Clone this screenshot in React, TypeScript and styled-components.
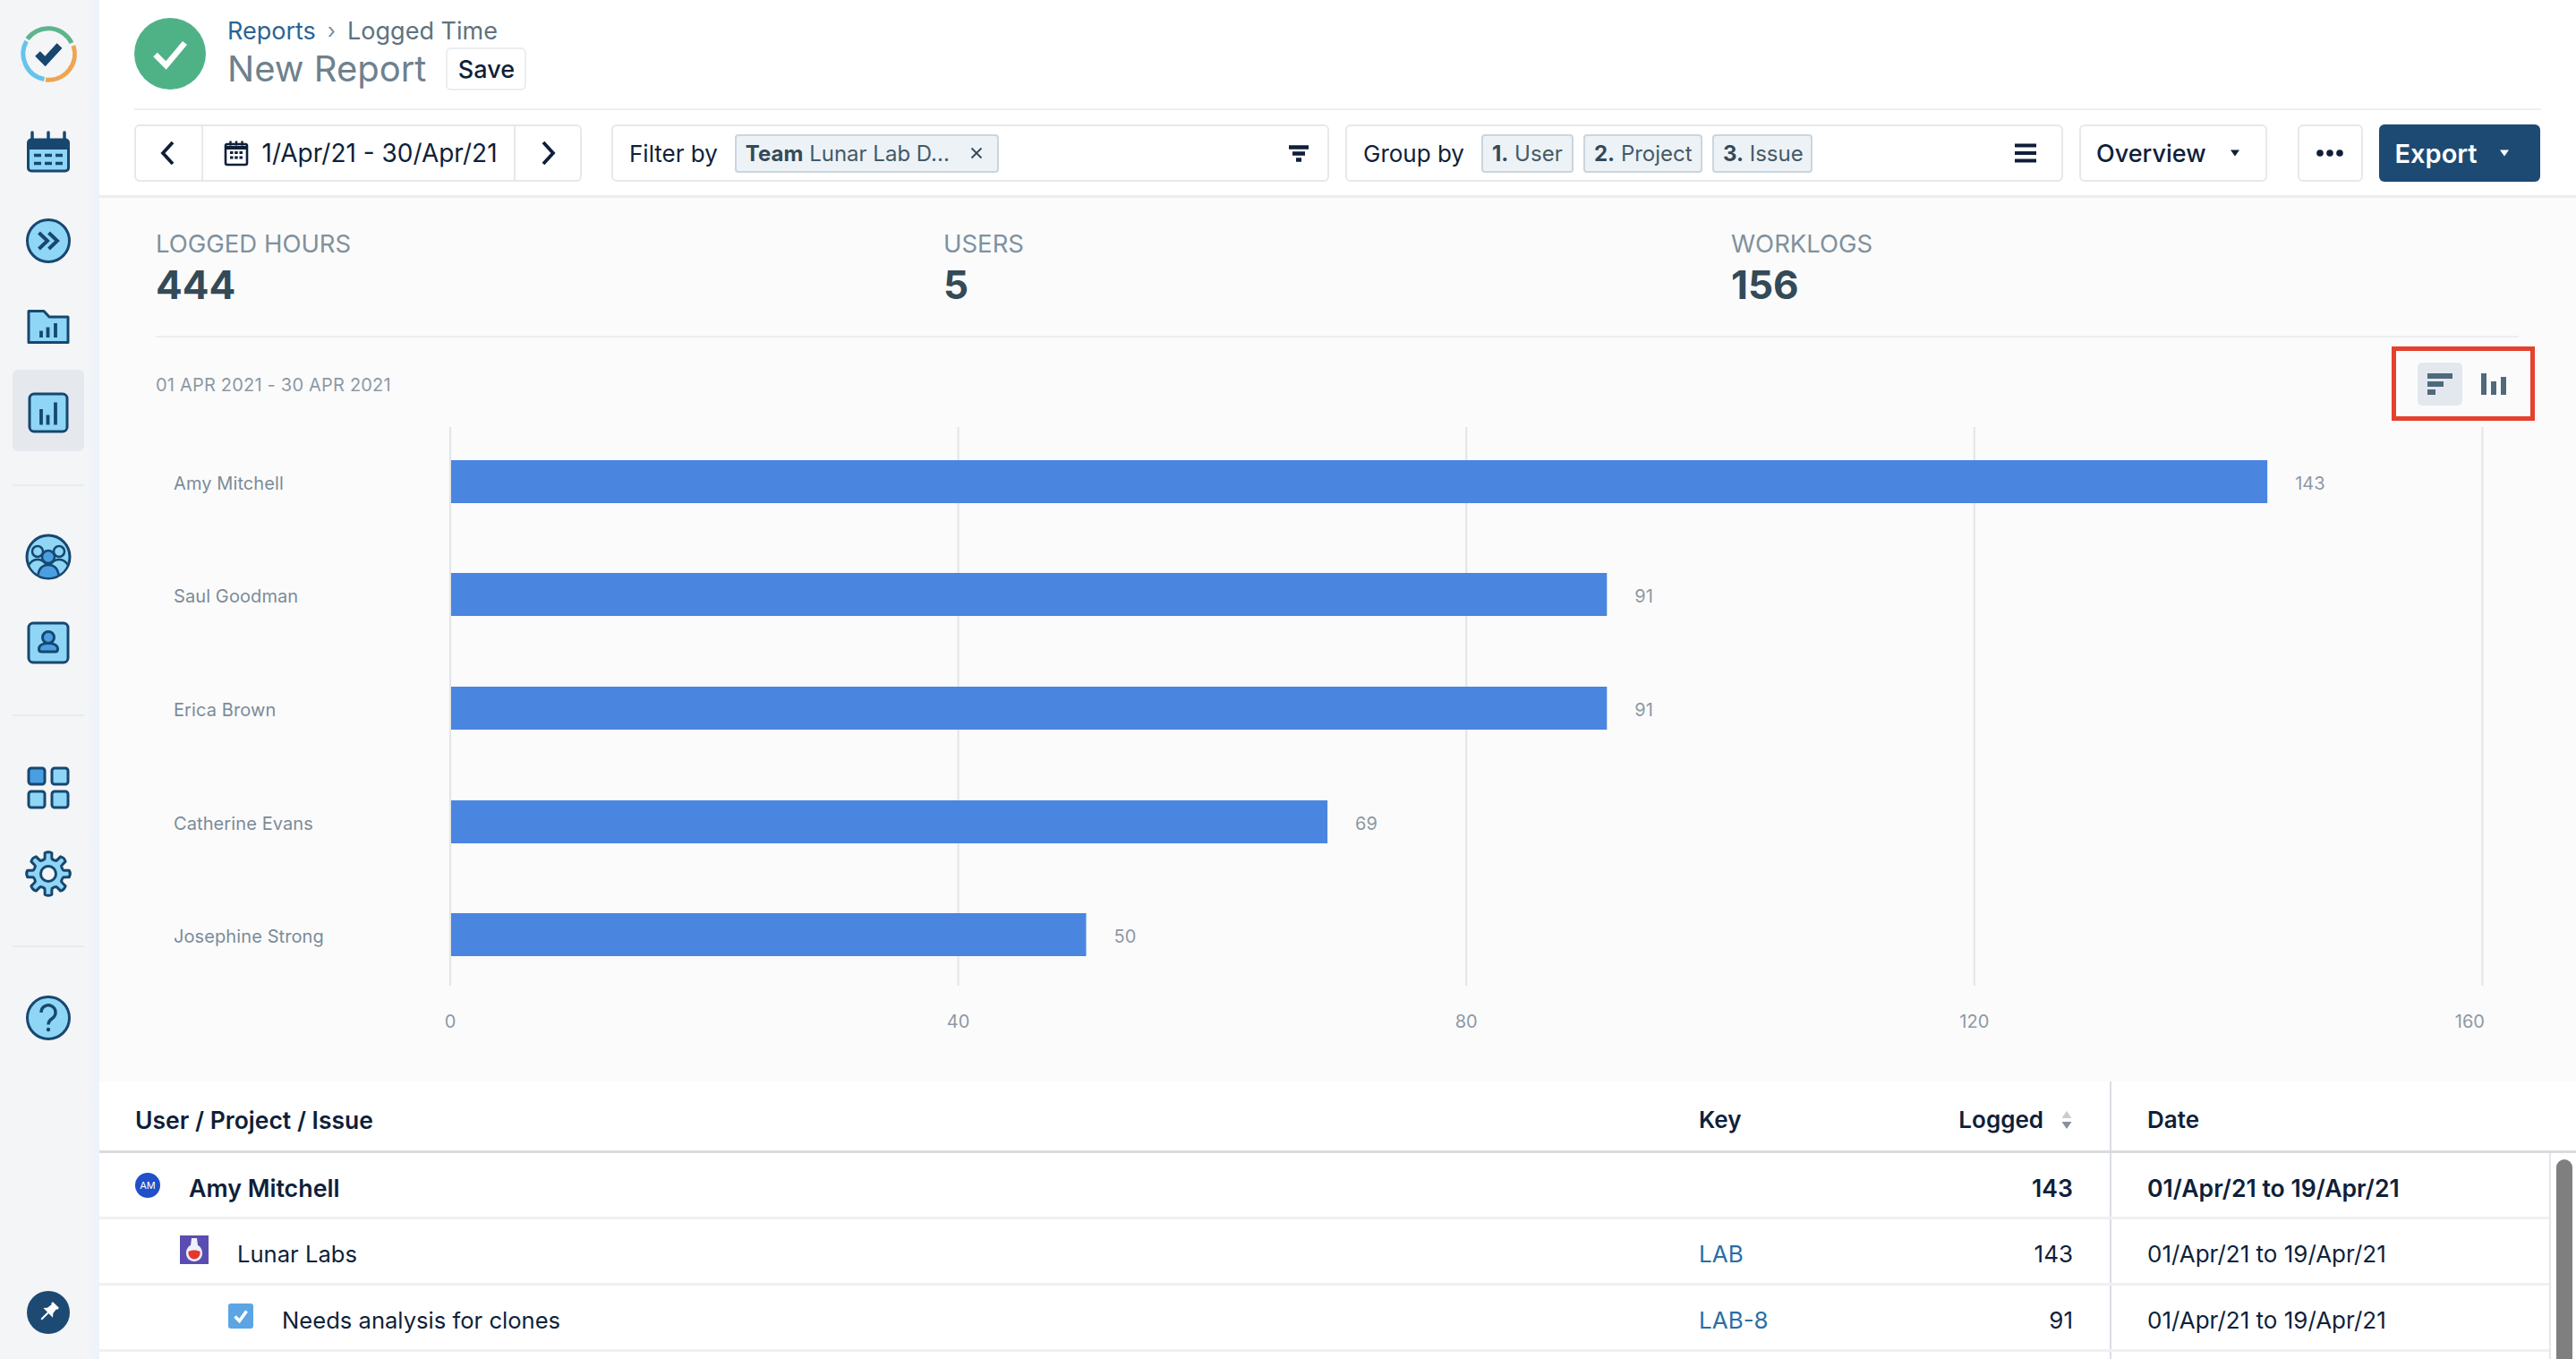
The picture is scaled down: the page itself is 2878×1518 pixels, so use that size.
import React from 'react';
import styled, { createGlobalStyle } from 'styled-components';

const DARK = '#17476f';
const LIGHT = '#8fd6f6';
const MID = '#4a9fe3';

const gearPath = (() => {
  const cx = 32;
  const cy = 32;
  const teeth = 8;
  const pts: string[] = [];
  for (let i = 0; i < teeth; i += 1) {
    const a = (i * 2 * Math.PI) / teeth - Math.PI / 2;
    const step = Math.PI / teeth;
    const pt = (r: number, ang: number) =>
      `${(cx + r * Math.cos(ang)).toFixed(2)} ${(cy + r * Math.sin(ang)).toFixed(2)}`;
    pts.push(`${i === 0 ? 'M' : 'L'}${pt(17, a - step * 0.62)}`);
    pts.push(`Q${pt(19, a - step * 0.5)} ${pt(23.5, a - step * 0.42)}`);
    pts.push(`Q${pt(25.5, a)} ${pt(23.5, a + step * 0.42)}`);
    pts.push(`Q${pt(19, a + step * 0.5)} ${pt(17, a + step * 0.62)}`);
    pts.push(`Q${pt(16, a + step)} ${pt(17, a + step * 1.38)}`);
  }
  return `${pts.join(' ')} Z`;
})();

const Icon64 = ({ children }: { children: React.ReactNode }) => (
  <svg width="64" height="64" viewBox="0 0 64 64" fill="none">
    {children}
  </svg>
);

const LogoIcon = () => (
  <svg width="72" height="72" viewBox="0 0 72 72" fill="none">
    <path d="M12.5 19.5A29 29 0 0 1 62 24" stroke="#5cb58d" strokeWidth="5" />
    <path d="M64 27A29 29 0 0 1 33 65" stroke="#eea551" strokeWidth="5" />
    <path d="M31.5 64.5A29 29 0 0 1 11.5 22" stroke="#66c4ec" strokeWidth="5" />
    <path d="M24 36l8.500 8.500L48.500 27" stroke={DARK} strokeWidth="8" />
  </svg>
);

const CalendarIcon = () => (
  <Icon64>
    <path d="M14 7v9M32 7v9M50 7v9" stroke={DARK} strokeWidth="3.5" strokeLinecap="round" />
    <rect x="9.5" y="15" width="45" height="35" rx="3.5" fill={LIGHT} stroke={DARK} strokeWidth="3" />
    <path d="M9 18.5a4 4 0 0 1 4-4h38a4 4 0 0 1 4 4V26H9z" fill={DARK} />
    <path d="M16 32.5h8M28 32.5h8M40 32.5h8M16 41.5h8M28 41.5h8M40 41.5h8" stroke={DARK} strokeWidth="3.5" />
  </Icon64>
);

const ForwardIcon = () => (
  <Icon64>
    <circle cx="32" cy="32" r="23.5" fill={LIGHT} stroke={DARK} strokeWidth="3" />
    <path d="M21.5 23l9.5 9-9.5 9M32.5 23l9.5 9-9.5 9" stroke={DARK} strokeWidth="4" />
  </Icon64>
);

const FolderIcon = () => (
  <Icon64>
    <path d="M10 14.5h17l6 6.5h21v28.5H10z" fill={LIGHT} stroke={DARK} strokeWidth="3" strokeLinejoin="round" />
    <path d="M24 44v-7.5M31.5 44V32.500M40 44V28" stroke={DARK} strokeWidth="3.8" />
  </Icon64>
);

const ReportIcon = () => (
  <Icon64>
    <rect x="11" y="11" width="42" height="42" rx="5" fill={LIGHT} stroke={DARK} strokeWidth="3" />
    <path d="M24 45.500V28M31.5 45.500V34.500M40 45.500V20.500" stroke={DARK} strokeWidth="3.800" />
  </Icon64>
);

const TeamIcon = () => (
  <Icon64>
    <defs>
      <clipPath id="teamClip">
        <circle cx="32" cy="32" r="23" />
      </clipPath>
    </defs>
    <circle cx="32" cy="32" r="24" fill={LIGHT} stroke={DARK} strokeWidth="3" />
    <g clipPath="url(#teamClip)" stroke={DARK} strokeWidth="2.5">
      <circle cx="20" cy="26" r="6" fill={LIGHT} />
      <circle cx="44" cy="26" r="6" fill={LIGHT} />
      <path d="M8 52c0-11 5-17 12-17s12 6 12 17z" fill={LIGHT} />
      <path d="M32 52c0-11 5-17 12-17s12 6 12 17z" fill={LIGHT} />
      <circle cx="32" cy="32" r="7" fill={MID} />
      <path d="M20 58c0-12 5-17 12-17s12 5 12 17z" fill={MID} />
    </g>
  </Icon64>
);

const ContactIcon = () => (
  <Icon64>
    <rect x="10" y="10" width="44" height="44" rx="5" fill={LIGHT} stroke={DARK} strokeWidth="3" />
    <circle cx="32" cy="26" r="6.500" fill={MID} stroke={DARK} strokeWidth="3" />
    <path d="M21.500 39c0-4 4-6.500 10.500-6.500S42.500 35 42.500 39c0 2-1 3-3 3h-15c-2 0-3-1-3-3z" fill={MID} stroke={DARK} strokeWidth="3" />
  </Icon64>
);

const AppsIcon = () => (
  <Icon64>
    <rect x="10" y="10" width="18" height="18" rx="3" fill={MID} stroke={DARK} strokeWidth="3" />
    <rect x="36" y="10" width="18" height="18" rx="3" fill={LIGHT} stroke={DARK} strokeWidth="3" />
    <rect x="10" y="36" width="18" height="18" rx="3" fill={LIGHT} stroke={DARK} strokeWidth="3" />
    <rect x="36" y="36" width="18" height="18" rx="3" fill={LIGHT} stroke={DARK} strokeWidth="3" />
  </Icon64>
);

const GearIcon = () => (
  <Icon64>
    <path d={gearPath} fill={LIGHT} stroke={DARK} strokeWidth="3" strokeLinejoin="round" />
    <circle cx="32" cy="32" r="8.500" fill="#f2f6fa" stroke={DARK} strokeWidth="3" />
  </Icon64>
);

const HelpIcon = () => (
  <Icon64>
    <circle cx="32" cy="32" r="23.500" fill={LIGHT} stroke={DARK} strokeWidth="3" />
    <path d="M24 26a8 8 0 1 1 12.500 6.500c-3 2-4.500 3.500-4.500 7" stroke={DARK} strokeWidth="3.500" />
    <circle cx="32" cy="45" r="2.200" fill={DARK} />
  </Icon64>
);

const PinIcon = () => (
  <Icon64>
    <circle cx="32" cy="32" r="24" fill="#1d4a73" />
    <g transform="rotate(45 32 32)" fill="#fff">
      <rect x="27" y="20" width="10" height="3" rx="1" />
      <path d="M28.500 22h7l1 7 3 3.500h-15l3-3.500z" />
      <rect x="31" y="32" width="2" height="11" />
    </g>
  </Icon64>
);

const ChevronIcon = ({ right }: { right?: boolean }) => (
  <svg width="22" height="30" viewBox="0 0 22 30" fill="none">
    <path d={right ? 'M6 3l11 12L6 27' : 'M16 3L5 15l11 12'} stroke="#0f1f3a" strokeWidth="3.800" />
  </svg>
);

const SmallCalendarIcon = () => (
  <svg width="30" height="30" viewBox="0 0 30 30" fill="none">
    <rect x="3" y="5" width="24" height="23" rx="2" stroke="#0f1f3a" strokeWidth="2.600" />
    <path d="M3 9h24" stroke="#0f1f3a" strokeWidth="4" />
    <path d="M8.500 1.500v5M15 1.500v5M21.500 1.500v5" stroke="#0f1f3a" strokeWidth="2.400" />
    <path d="M8 14.500h3.500M13.200 14.500h3.500M18.500 14.500h3.500M8 20h3.500M13.200 20h3.500M18.500 20h3.500" stroke="#0f1f3a" strokeWidth="3" />
  </svg>
);

const CloseIcon = () => (
  <svg width="16" height="16" viewBox="0 0 16 16" fill="none">
    <path d="M2.500 2.500l11 11M13.500 2.500l-11 11" stroke="#344a57" strokeWidth="1.800" />
  </svg>
);

const FunnelIcon = () => (
  <svg width="22" height="19" viewBox="0 0 22 19" fill="none">
    <path d="M0 2.500h22M4 9.500h14M8 16.500h6" stroke="#0f1f3a" strokeWidth="4.400" />
  </svg>
);

const MenuIcon = () => (
  <svg width="24" height="22" viewBox="0 0 24 22" fill="none">
    <path d="M0 2.500h24M0 11h24M0 19.500h24" stroke="#0f1f3a" strokeWidth="4" />
  </svg>
);

const CaretIcon = ({ color }: { color: string }) => (
  <svg width="12" height="8" viewBox="0 0 12 8">
    <path d="M1 0.500h10L6 7.500z" fill={color} />
  </svg>
);

const DotsIcon = () => (
  <svg width="30" height="8" viewBox="0 0 30 8">
    <circle cx="4" cy="4" r="3.800" fill="#0f1f3a" />
    <circle cx="15" cy="4" r="3.800" fill="#0f1f3a" />
    <circle cx="26" cy="4" r="3.800" fill="#0f1f3a" />
  </svg>
);

const HBarsIcon = () => (
  <svg width="28" height="24" viewBox="0 0 28 24">
    <path d="M0 0h28v6H0zM0 9h18v6H0zM0 18h9v6H0z" fill="#4e6a7c" />
  </svg>
);

const VBarsIcon = () => (
  <svg width="28" height="24" viewBox="0 0 28 24">
    <path d="M0 0h6v24H0zM11 9h6v15h-6zM22 4h6v20h-6z" fill="#4e6a7c" />
  </svg>
);

const SortIcon = () => (
  <svg width="14" height="22" viewBox="0 0 14 22">
    <path d="M7 1l5.500 8h-11z" fill="#c9cdd2" />
    <path d="M1.500 13h11L7 21z" fill="#8a9099" />
  </svg>
);

const ProjectIcon = () => (
  <svg width="32" height="32" viewBox="0 0 32 32">
    <rect width="32" height="32" fill="#5a4db2" />
    <path d="M13 3h6l1 8c4 2 5 6 5 9 0 5-4 9-9 9s-9-4-9-9c0-3 1-7 5-9z" fill="#eef0fb" />
    <path d="M9.500 18c3-2 10-2 13 0 .7 4.500-2.500 8.500-6.500 8.500S8.800 22.500 9.500 18z" fill="#e2392f" />
  </svg>
);

const CheckboxIcon = () => (
  <svg width="28" height="28" viewBox="0 0 28 28" fill="none">
    <rect width="28" height="28" rx="3" fill="#5ba5e4" />
    <path d="M7.500 14.500l5 5 8-11" stroke="#fff" strokeWidth="3.600" />
  </svg>
);

const BADGE_CHECK = (
  <svg width="80" height="80" viewBox="0 0 80 80" fill="none">
    <circle cx="40" cy="40" r="40" fill="#4fb286" />
    <path d="M23.500 41l12 12 21-25" stroke="#fff" strokeWidth="6.500" />
  </svg>
);

const PLOT_LEFT = 392;
const UNIT = 14.19;
const GRID = [0, 40, 80, 120, 160];
const AXIS_OFFSET: Record<number, number> = { 160: -14 };
const ROW_Y = [44, 170, 297, 424, 550];
const USERS = [
  { name: 'Amy Mitchell', hours: 143 },
  { name: 'Saul Goodman', hours: 91 },
  { name: 'Erica Brown', hours: 91 },
  { name: 'Catherine Evans', hours: 69 },
  { name: 'Josephine Strong', hours: 50 },
];

const BarChart = () => (
  <S.ChartSvg viewBox="0 0 2767 738" width="2767" height="738">
    {GRID.map((tick) => {
      const x = PLOT_LEFT + tick * UNIT;
      return (
        <g key={tick}>
          <line x1={x} x2={x} y1="7" y2="631" stroke="#e2e4e7" strokeWidth="2" />
          <text x={x + (AXIS_OFFSET[tick] || 0)} y="678" textAnchor="middle" fill="#8d99a4">
            {tick}
          </text>
        </g>
      );
    })}
    {USERS.map((user, i) => (
      <g key={user.name}>
        <S.RowName x="83" y={ROW_Y[i] + 33} fill="#7c8b97">
          {user.name}
        </S.RowName>
        <rect x={PLOT_LEFT + 1} y={ROW_Y[i]} width={user.hours * UNIT} height="48" fill="#4a85e0" />
        <text x={PLOT_LEFT + user.hours * UNIT + 32} y={ROW_Y[i] + 33} fill="#8d99a4">
          {user.hours}
        </text>
      </g>
    ))}
  </S.ChartSvg>
);

const App = () => (
  <>
    <GlobalStyle />
    <S.Page>
      <S.Sidebar>
        <S.Logo>
          <LogoIcon />
        </S.Logo>
        <S.NavItem><CalendarIcon /></S.NavItem>
        <S.NavItem><ForwardIcon /></S.NavItem>
        <S.NavItem><FolderIcon /></S.NavItem>
        <S.NavItem $active><ReportIcon /></S.NavItem>
        <S.NavDivider />
        <S.NavItem><TeamIcon /></S.NavItem>
        <S.NavItem><ContactIcon /></S.NavItem>
        <S.NavDivider />
        <S.NavItem><AppsIcon /></S.NavItem>
        <S.NavItem><GearIcon /></S.NavItem>
        <S.NavDivider />
        <S.NavItem><HelpIcon /></S.NavItem>
        <S.PinSlot><PinIcon /></S.PinSlot>
      </S.Sidebar>

      <S.Main>
        <S.Header>
          <S.TitleRow>
            {BADGE_CHECK}
            <S.TitleBlock>
              <S.Breadcrumb>
                <S.Crumb>Reports</S.Crumb>
                <S.CrumbArrow>›</S.CrumbArrow>
                Logged Time
              </S.Breadcrumb>
              <S.TitleLine>
                <S.Title>New Report</S.Title>
                <S.SaveButton>Save</S.SaveButton>
              </S.TitleLine>
            </S.TitleBlock>
          </S.TitleRow>
          <S.Toolbar>
            <S.DateGroup>
              <S.DateArrow><ChevronIcon /></S.DateArrow>
              <S.DateRange>
                <SmallCalendarIcon />
                1/Apr/21 - 30/Apr/21
              </S.DateRange>
              <S.DateArrow><ChevronIcon right /></S.DateArrow>
            </S.DateGroup>
            <S.FieldBox $spaced>
              <S.FieldLabel>Filter by</S.FieldLabel>
              <S.Chip $width={295}>
                <b>Team</b>&nbsp;Lunar Lab D...
                <S.ChipClose><CloseIcon /></S.ChipClose>
              </S.Chip>
              <S.FieldIcon $inset={3}><FunnelIcon /></S.FieldIcon>
            </S.FieldBox>
            <S.FieldBox>
              <S.FieldLabel>Group by</S.FieldLabel>
              <S.Chip $width={103}><b>1.</b>&nbsp;User</S.Chip>
              <S.Chip $width={133}><b>2.</b>&nbsp;Project</S.Chip>
              <S.Chip $width={112}><b>3.</b>&nbsp;Issue</S.Chip>
              <S.FieldIcon $inset={10}><MenuIcon /></S.FieldIcon>
            </S.FieldBox>
            <S.OverviewButton>
              Overview
              <CaretIcon color="#0f1f3a" />
            </S.OverviewButton>
            <S.MoreButton><DotsIcon /></S.MoreButton>
            <S.ExportButton>
              Export
              <CaretIcon color="#fff" />
            </S.ExportButton>
          </S.Toolbar>
        </S.Header>

        <S.Content>
          <S.Stats>
            <S.Stat>
              <S.StatLabel>LOGGED HOURS</S.StatLabel>
              <S.StatValue>444</S.StatValue>
            </S.Stat>
            <S.Stat>
              <S.StatLabel>USERS</S.StatLabel>
              <S.StatValue>5</S.StatValue>
            </S.Stat>
            <S.Stat>
              <S.StatLabel>WORKLOGS</S.StatLabel>
              <S.StatValue>156</S.StatValue>
            </S.Stat>
          </S.Stats>
          <S.ChartHeader>
            <S.ChartRange>01 APR 2021 - 30 APR 2021</S.ChartRange>
            <S.ChartSwitch>
              <S.SwitchButton $active><HBarsIcon /></S.SwitchButton>
              <S.SwitchButton><VBarsIcon /></S.SwitchButton>
            </S.ChartSwitch>
          </S.ChartHeader>
          <BarChart />
        </S.Content>

        <S.Table>
          <S.HeadRow>
            <S.HeadName>User / Project / Issue</S.HeadName>
            <S.KeyCell>Key</S.KeyCell>
            <S.LoggedCell $sortable>
              Logged
              <SortIcon />
            </S.LoggedCell>
            <S.DateCell>Date</S.DateCell>
          </S.HeadRow>
          <S.TableBody>
            <S.Rows>
              <S.Row $bold>
                <S.NameCell $indent={0}>
                  <S.Avatar>AM</S.Avatar>
                  Amy Mitchell
                </S.NameCell>
                <S.KeyCell />
                <S.LoggedCell>143</S.LoggedCell>
                <S.DateCell>01/Apr/21 to 19/Apr/21</S.DateCell>
              </S.Row>
              <S.Row>
                <S.NameCell $indent={50}>
                  <ProjectIcon />
                  Lunar Labs
                </S.NameCell>
                <S.KeyCell><S.IssueLink>LAB</S.IssueLink></S.KeyCell>
                <S.LoggedCell>143</S.LoggedCell>
                <S.DateCell>01/Apr/21 to 19/Apr/21</S.DateCell>
              </S.Row>
              <S.Row>
                <S.NameCell $indent={104}>
                  <CheckboxIcon />
                  Needs analysis for clones
                </S.NameCell>
                <S.KeyCell><S.IssueLink>LAB-8</S.IssueLink></S.KeyCell>
                <S.LoggedCell>91</S.LoggedCell>
                <S.DateCell>01/Apr/21 to 19/Apr/21</S.DateCell>
              </S.Row>
              <S.Row>
                <S.NameCell />
                <S.KeyCell />
                <S.LoggedCell />
                <S.DateCell />
              </S.Row>
            </S.Rows>
            <S.ScrollTrack>
              <S.ScrollThumb />
            </S.ScrollTrack>
          </S.TableBody>
        </S.Table>
      </S.Main>
    </S.Page>
  </>
);

const GlobalStyle = createGlobalStyle`
  html, body {
    margin: 0;
    padding: 0;
    background: #fff;
  }
  body {
    font-family: Inter, "Liberation Sans", sans-serif;
    color: #0f1f3a;
    overflow: hidden;
  }
`;

const ROW_COLUMNS = '1747px 268px 150px 41px 1fr';

const S = {
  Page: styled.div`
    display: flex;
    width: 2878px;
    height: 1518px;
    overflow: hidden;
  `,

  Sidebar: styled.nav`
    display: flex;
    flex-direction: column;
    align-items: center;
    flex: 0 0 111px;
    box-sizing: border-box;
    padding: 0 17px 0 14px;
    background: linear-gradient(90deg, #f4f5f7 0, #f4f5f7 86%, #ecf3fb 100%);
  `,

  Logo: styled.div`
    display: flex;
    justify-content: center;
    align-items: center;
    flex: 0 0 120px;
    margin-bottom: 5px;
  `,

  NavItem: styled.div<{ $active?: boolean }>`
    display: flex;
    justify-content: center;
    align-items: center;
    flex: 0 0 91px;
    width: 80px;
    box-sizing: border-box;
    margin-bottom: 5px;
    padding-top: 4px;
    border-radius: 6px;
    background: ${(props) => (props.$active ? '#e5e9ee' : 'transparent')};
  `,

  NavDivider: styled.div`
    flex: 0 0 2px;
    width: 80px;
    margin: 31.5px 0 32px;
    background: #e7ebf0;
  `,

  PinSlot: styled.div`
    display: flex;
    justify-content: center;
    margin-top: auto;
    margin-bottom: 20px;
  `,

  Main: styled.main`
    display: flex;
    flex-direction: column;
    flex: 1;
    min-width: 0;
  `,

  Header: styled.header`
    flex: 0 0 auto;
    height: 221px;
    box-sizing: border-box;
    padding: 0 39px;
    border-bottom: 3px solid #ebedf0;
    background: #fff;
  `,

  TitleRow: styled.div`
    display: flex;
    gap: 24px;
    height: 123px;
    box-sizing: border-box;
    padding-top: 20px;
    border-bottom: 2px solid #eeeff1;
  `,

  TitleBlock: styled.div`
    margin-top: -4px;
  `,

  Breadcrumb: styled.div`
    display: flex;
    align-items: center;
    height: 36px;
    font-size: 27px;
    color: #5e7280;
  `,

  Crumb: styled.span`
    color: #2a6496;
  `,

  CrumbArrow: styled.span`
    margin: 0 13px;
    color: #7f8d99;
    font-size: 24px;
  `,

  TitleLine: styled.div`
    display: flex;
    align-items: center;
    gap: 22px;
  `,

  Title: styled.h1`
    margin: 0;
    font-size: 40px;
    font-weight: 400;
    line-height: 50px;
    color: #6f818d;
  `,

  SaveButton: styled.button`
    width: 90px;
    height: 48px;
    padding: 0;
    border: 2px solid #ebedf0;
    border-radius: 6px;
    background: #fff;
    font: 500 27px Inter, sans-serif;
    color: #0f1f3a;
  `,

  Toolbar: styled.div`
    display: flex;
    gap: 18px;
    height: 64px;
    margin-top: 16px;
  `,

  DateGroup: styled.div`
    display: flex;
    flex: 0 0 auto;
    box-sizing: border-box;
    width: 500px;
    border: 2px solid #e6e8eb;
    border-radius: 6px;
  `,

  DateArrow: styled.div`
    display: flex;
    justify-content: center;
    align-items: center;
    flex: 1;
  `,

  DateRange: styled.div`
    display: flex;
    align-items: center;
    gap: 14px;
    flex: 0 0 351px;
    box-sizing: border-box;
    padding-left: 22px;
    border-left: 2px solid #e6e8eb;
    border-right: 2px solid #e6e8eb;
    font-size: 28px;
  `,

  FieldBox: styled.div<{ $spaced?: boolean }>`
    display: flex;
    align-items: center;
    gap: 11px;
    flex: 0 0 802px;
    box-sizing: border-box;
    margin-left: ${(props) => (props.$spaced ? 15 : 0)}px;
    padding: 0 18px;
    border: 2px solid #e6e8eb;
    border-radius: 6px;
  `,

  FieldLabel: styled.span`
    margin-right: 8px;
    font-size: 26px;
  `,

  FieldIcon: styled.span<{ $inset: number }>`
    display: flex;
    margin-left: auto;
    margin-right: ${(props) => props.$inset}px;
  `,

  Chip: styled.span<{ $width: number }>`
    display: flex;
    align-items: center;
    width: ${(props) => props.$width}px;
    height: 43px;
    box-sizing: border-box;
    padding: 0 9px 0 10px;
    border: 2px solid #cbd5dd;
    border-radius: 4px;
    background: #edf2f7;
    font-size: 24px;
    color: #445a68;
    white-space: nowrap;

    b {
      font-weight: 700;
      color: #344a57;
    }
  `,

  ChipClose: styled.span`
    display: flex;
    margin-left: auto;
    margin-right: 6px;
  `,

  OverviewButton: styled.button`
    display: flex;
    align-items: center;
    gap: 26px;
    flex: 0 0 210px;
    box-sizing: border-box;
    padding: 0 17px;
    border: 2px solid #e6e8eb;
    border-radius: 6px;
    background: #fff;
    font: 500 27px Inter, sans-serif;
    color: #0f1f3a;
  `,

  MoreButton: styled.button`
    display: flex;
    justify-content: center;
    align-items: center;
    flex: 0 0 73px;
    margin-left: 15.5px;
    padding: 0;
    border: 2px solid #e6e8eb;
    border-radius: 6px;
    background: #fff;
  `,

  ExportButton: styled.button`
    display: flex;
    align-items: center;
    gap: 24px;
    flex: 0 0 180px;
    box-sizing: border-box;
    padding: 0 18px;
    border: 0;
    border-radius: 6px;
    background: #1d4a73;
    font: 600 29px Inter, sans-serif;
    color: #fff;
  `,

  Content: styled.section`
    flex: 0 0 987px;
    background: #fbfbfc;
  `,

  Stats: styled.div`
    display: grid;
    grid-template-columns: repeat(3, 880px);
    height: 156px;
    box-sizing: border-box;
    margin: 0 64px 0 63px;
    padding-top: 33px;
    border-bottom: 2px solid #eceef0;
  `,

  Stat: styled.div`
    display: flex;
    flex-direction: column;
  `,

  StatLabel: styled.span`
    font-size: 27.5px;
    line-height: 36px;
    color: #7f919d;
  `,

  StatValue: styled.span`
    margin-top: 2px;
    font-size: 44px;
    font-weight: 700;
    line-height: 52px;
    color: #344a57;
  `,

  ChartHeader: styled.div`
    display: flex;
    justify-content: space-between;
    align-items: center;
    height: 83px;
    margin: 10px 46px 0 63px;
  `,

  ChartRange: styled.span`
    margin-top: 3px;
    font-size: 20px;
    letter-spacing: 0.2px;
    color: #8d99a4;
  `,

  ChartSwitch: styled.div`
    display: flex;
    align-items: center;
    gap: 10px;
    width: 160px;
    height: 83px;
    box-sizing: border-box;
    padding-left: 24px;
    border: 5px solid #e5402d;
  `,

  SwitchButton: styled.div<{ $active?: boolean }>`
    display: flex;
    justify-content: center;
    align-items: center;
    width: 50px;
    height: 48px;
    border-radius: 5px;
    background: ${(props) => (props.$active ? '#e3e8ee' : 'transparent')};
  `,

  ChartSvg: styled.svg`
    display: block;
    font-family: Inter, "Liberation Sans", sans-serif;
    font-size: 20px;
  `,

  RowName: styled.text`
    letter-spacing: 0.1px;
  `,

  Table: styled.section`
    flex: 1;
    min-height: 0;
    background: #fff;
    font-size: 26px;
  `,

  HeadRow: styled.div`
    display: grid;
    grid-template-columns: ${ROW_COLUMNS};
    height: 80px;
    box-sizing: border-box;
    padding: 0 0 0 40px;
    border-bottom: 3px solid #d8dbdf;
    font-weight: 600;

    > * {
      padding-top: 8px;
    }
  `,

  HeadName: styled.div`
    display: flex;
    align-items: center;
    font-size: 26.5px;
  `,

  TableBody: styled.div`
    display: flex;
  `,

  Rows: styled.div`
    flex: 1;
    min-width: 0;
  `,

  Row: styled.div<{ $bold?: boolean }>`
    display: grid;
    grid-template-columns: ${ROW_COLUMNS};
    height: 74px;
    box-sizing: border-box;
    padding-left: 40px;
    border-bottom: 3px solid #eff0f2;
    font-weight: ${(props) => (props.$bold ? 600 : 400)};
    font-size: ${(props) => (props.$bold ? 26.6 : 26)}px;

    > * {
      padding-top: 6px;
    }
  `,

  NameCell: styled.div<{ $indent?: number }>`
    display: flex;
    align-items: center;
    gap: 32px;
    padding-left: ${(props) => props.$indent || 0}px;
    font-size: ${(props) => (props.$indent ? 25.6 : 26.8)}px;

    svg {
      margin-top: -10px;
    }
  `,

  Avatar: styled.span`
    display: flex;
    justify-content: center;
    align-items: center;
    width: 28px;
    height: 28px;
    margin-top: -6px;
    border-radius: 50%;
    background: #1f50c8;
    font-size: 11px;
    font-weight: 400;
    color: #fff;
  `,

  KeyCell: styled.div`
    display: flex;
    align-items: center;
  `,

  IssueLink: styled.a`
    color: #2a6ea3;
  `,

  LoggedCell: styled.div<{ $sortable?: boolean }>`
    display: flex;
    justify-content: flex-end;
    align-items: center;
    gap: ${(props) => (props.$sortable ? 19 : 12)}px;
    grid-column: 3;
  `,

  DateCell: styled.div`
    display: flex;
    align-items: center;
    grid-column: 5;
    padding-left: 40px;
    border-left: 2px solid #d8dde2;
  `,

  ScrollTrack: styled.div`
    flex: 0 0 30px;
    box-sizing: border-box;
    height: 300px;
    padding: 7px 4px 0 6px;
    border-left: 2px solid #e4e6e9;
  `,

  ScrollThumb: styled.div`
    height: 300px;
    border-radius: 10px;
    background: #7f7f7f;
  `,
};

export default App;
